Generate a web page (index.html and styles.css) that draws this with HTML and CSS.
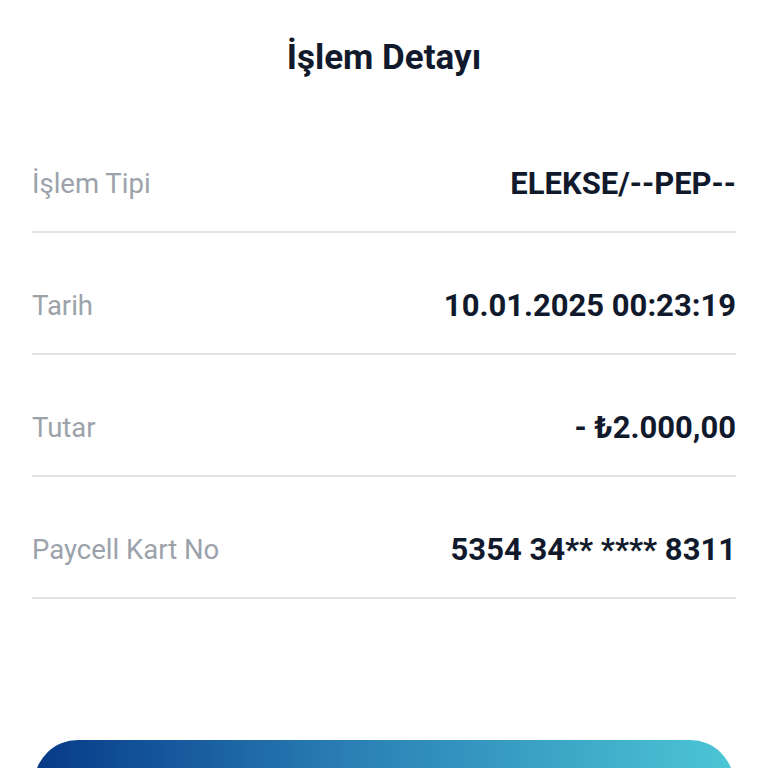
FILE: index.html
```html
<!DOCTYPE html>
<html lang="tr">
<head>
<meta charset="utf-8">
<link rel="stylesheet" href="styles.css">
</head>
<body>
<main class="page">
  <h1 class="title">İşlem Detayı</h1>
  <div class="rows">
    <div class="row"><span class="label">İşlem Tipi</span><span class="value">ELEKSE/--PEP--</span></div>
    <div class="row"><span class="label">Tarih</span><span class="value">10.01.2025 00:23:19</span></div>
    <div class="row"><span class="label">Tutar</span><span class="value">- ₺2.000,00</span></div>
    <div class="row"><span class="label">Paycell Kart No</span><span class="value">5354 34** **** 8311</span></div>
  </div>
  <button class="btn" type="button"></button>
</main>
</body>
</html>
```
FILE: styles.css
```css
html, body {
  margin: 0;
  padding: 0;
  background: #ffffff;
}
body {
  font-family: Roboto, "Noto Sans", sans-serif;
  overflow: hidden;
  height: 768px;
}
.page {
  padding: 40px 32px 0 32px;
  display: flex;
  flex-direction: column;
}
.title {
  margin: 0 0 35px 0;
  text-align: center;
  font-size: 35px;
  line-height: 36px;
  font-weight: 700;
  color: #111a2c;
}
.rows {
  display: flex;
  flex-direction: column;
}
.row {
  display: flex;
  justify-content: space-between;
  align-items: center;
  padding: 54px 0 30px 0;
  height: 36px;
  border-bottom: 2px solid #e2e2e4;
}
.label {
  font-size: 27.5px;
  color: #9ca2aa;
  font-weight: 400;
}
.value {
  font-size: 31px;
  font-weight: 700;
  color: #111a2c;
}
.btn {
  margin: 141px 2px 0 2px;
  height: 90px;
  border: none;
  border-radius: 44px;
  background: linear-gradient(90deg, #063a88 0%, #2a7fb5 45%, #4cc6d5 100%);
}
```
